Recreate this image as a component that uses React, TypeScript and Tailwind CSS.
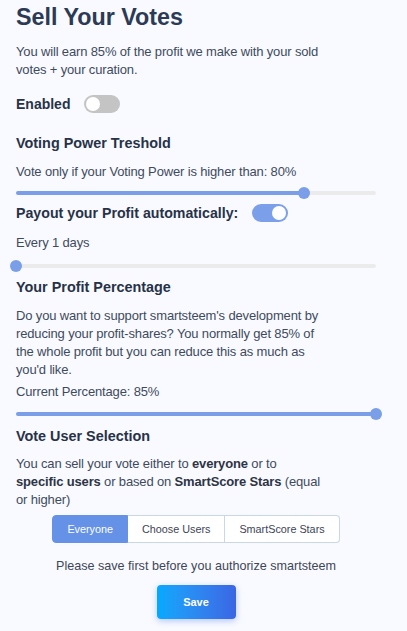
import React, { useState } from 'react';

const Toggle = ({ on, onChange }: { on: boolean; onChange: () => void }) => (
  <button
    onClick={onChange}
    className={`relative ml-[14px] h-[18px] w-[36px] rounded-full transition-colors ${on ? 'bg-[#7ba0e9]' : 'bg-[#c4c4c4]'}`}
  >
    <span
      className={`absolute top-[2px] h-[14px] w-[14px] rounded-full bg-white transition-all ${on ? 'left-[20px]' : 'left-[2px]'}`}
    />
  </button>
);

const Slider = ({ pct, className }: { pct: number; className?: string }) => (
  <div className={`relative h-[12px] w-[360px] ${className ?? ''}`}>
    <div className="absolute left-0 right-0 top-[4px] h-[4px] rounded-full bg-[#ebebeb]" />
    <div className="absolute left-0 top-[4px] h-[4px] rounded-full bg-[#7a9fe8]" style={{ width: `${pct}%` }} />
    <div
      className="absolute top-0 h-[12px] w-[12px] -translate-x-1/2 rounded-full bg-[#7a9fe8]"
      style={{ left: `${pct}%` }}
    />
  </div>
);

export default function App() {
  const [enabled, setEnabled] = useState(false);
  const [payout, setPayout] = useState(true);
  const [mode, setMode] = useState('everyone');

  const tabs = [
    { id: 'everyone', label: 'Everyone' },
    { id: 'users', label: 'Choose Users' },
    { id: 'stars', label: 'SmartScore Stars' },
  ];

  return (
    <div className="min-h-screen bg-[#f8faff] px-4 pb-3 text-[13px] leading-[18px] tracking-[-0.15px] text-[#414a5c] font-['Liberation_Sans',Arial,sans-serif]">
      <div className="w-[360px]">
        <h1 className="text-[23.3px] font-bold leading-[34px] tracking-normal text-[#2c3a55]">Sell Your Votes</h1>
        <p className="mt-[9px] max-w-[309px]">
          You will earn 85% of the profit we make with your sold votes + your curation.
        </p>

        <div className="mt-[16px] flex h-[18px] items-center">
          <span className="text-[14px] font-bold tracking-normal text-[#283247]">Enabled</span>
          <Toggle on={enabled} onChange={() => setEnabled(!enabled)} />
        </div>

        <h2 className="mt-[21px] text-[14.4px] font-bold tracking-normal text-[#283247]">Voting Power Treshold</h2>
        <p className="mt-[11px]">Vote only if your Voting Power is higher than: 80%</p>
        <Slider pct={80} className="mt-[6px]" />

        <div className="mt-[5px] flex h-[18px] items-center">
          <span className="text-[14.2px] font-bold tracking-normal text-[#283247]">Payout your Profit automatically:</span>
          <Toggle on={payout} onChange={() => setPayout(!payout)} />
        </div>
        <p className="mt-[12px]">Every 1 days</p>
        <Slider pct={0} className="mt-[8px]" />

        <h2 className="mt-[6px] text-[14.4px] font-bold tracking-normal text-[#283247]">Your Profit Percentage</h2>
        <p className="mt-[11px] max-w-[309px]">
          Do you want to support smartsteem's development by reducing your profit-shares? You normally get 85% of
          the whole profit but you can reduce this as much as you'd like.
        </p>
        <p className="mt-[4px]">Current Percentage: 85%</p>
        <Slider pct={100} className="mt-[7px]" />

        <h2 className="mt-[7px] text-[14.4px] font-bold tracking-normal text-[#283247]">Vote User Selection</h2>
        <p className="mt-[10px] max-w-[309px]">
          You can sell your vote either to <span className="font-bold text-[#2e3444]">everyone</span> or to{' '}
          <span className="font-bold text-[#2e3444]">specific users</span> or based on{' '}
          <span className="font-bold text-[#2e3444]">SmartScore Stars</span> (equal or higher)
        </p>

        <div className="mt-[6px] flex justify-center">
          <div className="flex h-[28px] text-[10.8px] tracking-normal">
            {tabs.map((t, i) => (
              <button
                key={t.id}
                onClick={() => setMode(t.id)}
                className={`px-[14px] ${i === 0 ? 'rounded-l-[4px]' : ''} ${i === tabs.length - 1 ? 'rounded-r-[4px]' : ''} ${
                  mode === t.id
                    ? 'border border-[#6592e6] bg-[#6592e6] text-white'
                    : `border border-[#c9d7e8] bg-white text-[#3d4455] ${i > 0 ? 'border-l-0' : ''}`
                }`}
              >
                {t.label}
              </button>
            ))}
          </div>
        </div>

        <p className="mt-[14px] text-center text-[12.6px] tracking-normal text-[#3f4656]">
          Please save first before you authorize smartsteem
        </p>
        <div className="mt-[10px] flex justify-center">
          <button className="h-[34px] w-[79px] rounded-[4px] bg-gradient-to-r from-[#00a9fe] to-[#3a66e4] text-[11px] font-semibold tracking-normal text-white shadow-[0_2px_6px_rgba(58,102,228,0.35)]">
            Save
          </button>
        </div>
      </div>
    </div>
  );
}
